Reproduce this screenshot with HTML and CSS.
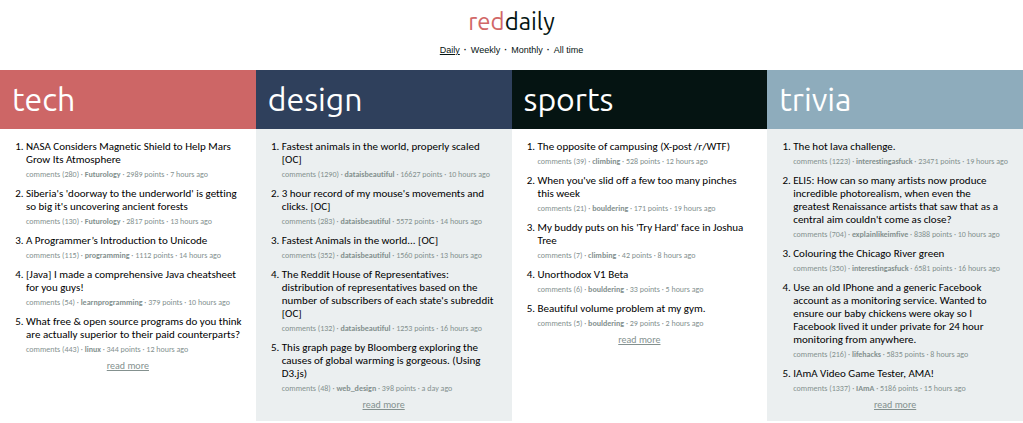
FILE: index.html
```html
<!DOCTYPE html>
<html lang="en">
<head>
<meta charset="utf-8">
<title>reddaily</title>
<link rel="stylesheet" href="styles.css">
</head>
<body>
<header class="site-header">
  <h1 class="logo"><span class="logo-red">red</span>daily</h1>
  <nav class="periods"><a class="current" href="#">Daily</a><span>·</span><a href="#">Weekly</a><span>·</span><a href="#">Monthly</a><span>·</span><a href="#">All time</a></nav>
</header>
<main class="columns">
  <section class="column tech">
    <h2 class="topic">tech</h2>
    <ol class="posts">
      <li><a class="title" href="#">NASA Considers Magnetic Shield to Help Mars Grow Its Atmosphere</a><p class="meta"><a href="#">comments (280)</a> · <a class="sub" href="#">Futurology</a> · 2989 points · 7 hours ago</p></li>
      <li><a class="title" href="#">Siberia's 'doorway to the underworld' is getting so big it's uncovering ancient forests</a><p class="meta"><a href="#">comments (130)</a> · <a class="sub" href="#">Futurology</a> · 2817 points · 13 hours ago</p></li>
      <li><a class="title" href="#">A Programmer’s Introduction to Unicode</a><p class="meta"><a href="#">comments (115)</a> · <a class="sub" href="#">programming</a> · 1112 points · 14 hours ago</p></li>
      <li><a class="title" href="#">[Java] I made a comprehensive Java cheatsheet for you guys!</a><p class="meta"><a href="#">comments (54)</a> · <a class="sub" href="#">learnprogramming</a> · 379 points · 10 hours ago</p></li>
      <li><a class="title" href="#">What free &amp; open source programs do you think are actually superior to their paid counterparts?</a><p class="meta"><a href="#">comments (443)</a> · <a class="sub" href="#">linux</a> · 344 points · 12 hours ago</p></li>
    </ol>
    <a class="more" href="#">read more</a>
  </section>
  <section class="column design">
    <h2 class="topic">design</h2>
    <ol class="posts">
      <li><a class="title" href="#">Fastest animals in the world, properly scaled [OC]</a><p class="meta"><a href="#">comments (1290)</a> · <a class="sub" href="#">dataisbeautiful</a> · 16627 points · 10 hours ago</p></li>
      <li><a class="title" href="#">3 hour record of my mouse's movements and clicks. [OC]</a><p class="meta"><a href="#">comments (283)</a> · <a class="sub" href="#">dataisbeautiful</a> · 5572 points · 14 hours ago</p></li>
      <li><a class="title" href="#">Fastest Animals in the world... [OC]</a><p class="meta"><a href="#">comments (352)</a> · <a class="sub" href="#">dataisbeautiful</a> · 1560 points · 13 hours ago</p></li>
      <li><a class="title" href="#">The Reddit House of Representatives: distribution of representatives based on the number of subscribers of each state's subreddit [OC]</a><p class="meta"><a href="#">comments (132)</a> · <a class="sub" href="#">dataisbeautiful</a> · 1253 points · 16 hours ago</p></li>
      <li><a class="title" href="#">This graph page by Bloomberg exploring the causes of global warming is gorgeous. (Using D3.js)</a><p class="meta"><a href="#">comments (48)</a> · <a class="sub" href="#">web_design</a> · 398 points · a day ago</p></li>
    </ol>
    <a class="more" href="#">read more</a>
  </section>
  <section class="column sports">
    <h2 class="topic">sports</h2>
    <ol class="posts">
      <li><a class="title" href="#">The opposite of campusing (X-post /r/WTF)</a><p class="meta"><a href="#">comments (39)</a> · <a class="sub" href="#">climbing</a> · 528 points · 12 hours ago</p></li>
      <li><a class="title" href="#">When you've slid off a few too many pinches this&nbsp;week</a><p class="meta"><a href="#">comments (21)</a> · <a class="sub" href="#">bouldering</a> · 171 points · 19 hours ago</p></li>
      <li><a class="title" href="#">My buddy puts on his 'Try Hard' face in Joshua Tree</a><p class="meta"><a href="#">comments (7)</a> · <a class="sub" href="#">climbing</a> · 42 points · 8 hours ago</p></li>
      <li><a class="title" href="#">Unorthodox V1 Beta</a><p class="meta"><a href="#">comments (6)</a> · <a class="sub" href="#">bouldering</a> · 33 points · 5 hours ago</p></li>
      <li><a class="title" href="#">Beautiful volume problem at my gym.</a><p class="meta"><a href="#">comments (5)</a> · <a class="sub" href="#">bouldering</a> · 29 points · 2 hours ago</p></li>
    </ol>
    <a class="more" href="#">read more</a>
  </section>
  <section class="column trivia">
    <h2 class="topic">trivia</h2>
    <ol class="posts">
      <li><a class="title" href="#">The hot lava challenge.</a><p class="meta"><a href="#">comments (1223)</a> · <a class="sub" href="#">interestingasfuck</a> · 23471 points · 19 hours ago</p></li>
      <li><a class="title" href="#">ELI5: How can so many artists now produce incredible photorealism, when even the greatest Renaissance artists that saw that as a central aim couldn't come as close?</a><p class="meta"><a href="#">comments (704)</a> · <a class="sub" href="#">explainlikeimfive</a> · 8388 points · 10 hours ago</p></li>
      <li><a class="title" href="#">Colouring the Chicago River green</a><p class="meta"><a href="#">comments (350)</a> · <a class="sub" href="#">interestingasfuck</a> · 6581 points · 16 hours ago</p></li>
      <li><a class="title" href="#">Use an old IPhone and a generic Facebook account as a monitoring service. Wanted to ensure our baby chickens were okay so I Facebook lived it under private for 24 hour monitoring from anywhere.</a><p class="meta"><a href="#">comments (216)</a> · <a class="sub" href="#">lifehacks</a> · 5835 points · 8 hours ago</p></li>
      <li><a class="title" href="#">IAmA Video Game Tester, AMA!</a><p class="meta"><a href="#">comments (1337)</a> · <a class="sub" href="#">IAmA</a> · 5186 points · 15 hours ago</p></li>
    </ol>
    <a class="more" href="#">read more</a>
  </section>
</main>
</body>
</html>
```
FILE: styles.css
```css
* { box-sizing: border-box; }
body { margin: 0; background: #fff; color: #051412; font-family: Carlito, Lato, sans-serif; font-variant-ligatures: none; }
a { color: inherit; text-decoration: none; }

.site-header { display: flex; flex-direction: column; align-items: center; gap: 5px; padding: 5px 0 14px; }
.logo { margin: 0; font: 400 24px/34px Ubuntu, "Noto Sans", sans-serif; }
.logo-red { color: #d16767; }
.periods { display: flex; gap: 4px; font: 9px/12px "Liberation Sans", Arial, sans-serif; }
.periods span { font-weight: 700; }
.current { text-decoration: underline; }

.columns { display: grid; grid-template-columns: repeat(4, minmax(0, 1fr)); }
.column { display: flex; flex-direction: column; padding-bottom: 10px; }
.column:nth-child(even) { background: #ebeff0; }
.topic { margin: 0; padding: 0 12px; color: #fff; font: 400 32px/59px Ubuntu, "Noto Sans", sans-serif; }
.tech .topic { background: #cd6666; }
.design .topic { background: #2f405c; }
.sports .topic { background: #051412; }
.trivia .topic { background: #8eacbc; }

.posts { display: flex; flex-direction: column; gap: 6px; margin: 0; padding: 11px 14px 0 26px; color: #000; font-size: 11px; line-height: 13px; }
.title { display: block; }
.meta { margin: 2px 0 0; color: #84918f; font-size: 8px; line-height: 13px; white-space: nowrap; }
.sub { font-weight: 700; }
.more { align-self: center; margin-top: 3px; color: #84918f; font-size: 10px; line-height: 13px; text-decoration: underline; }
```
